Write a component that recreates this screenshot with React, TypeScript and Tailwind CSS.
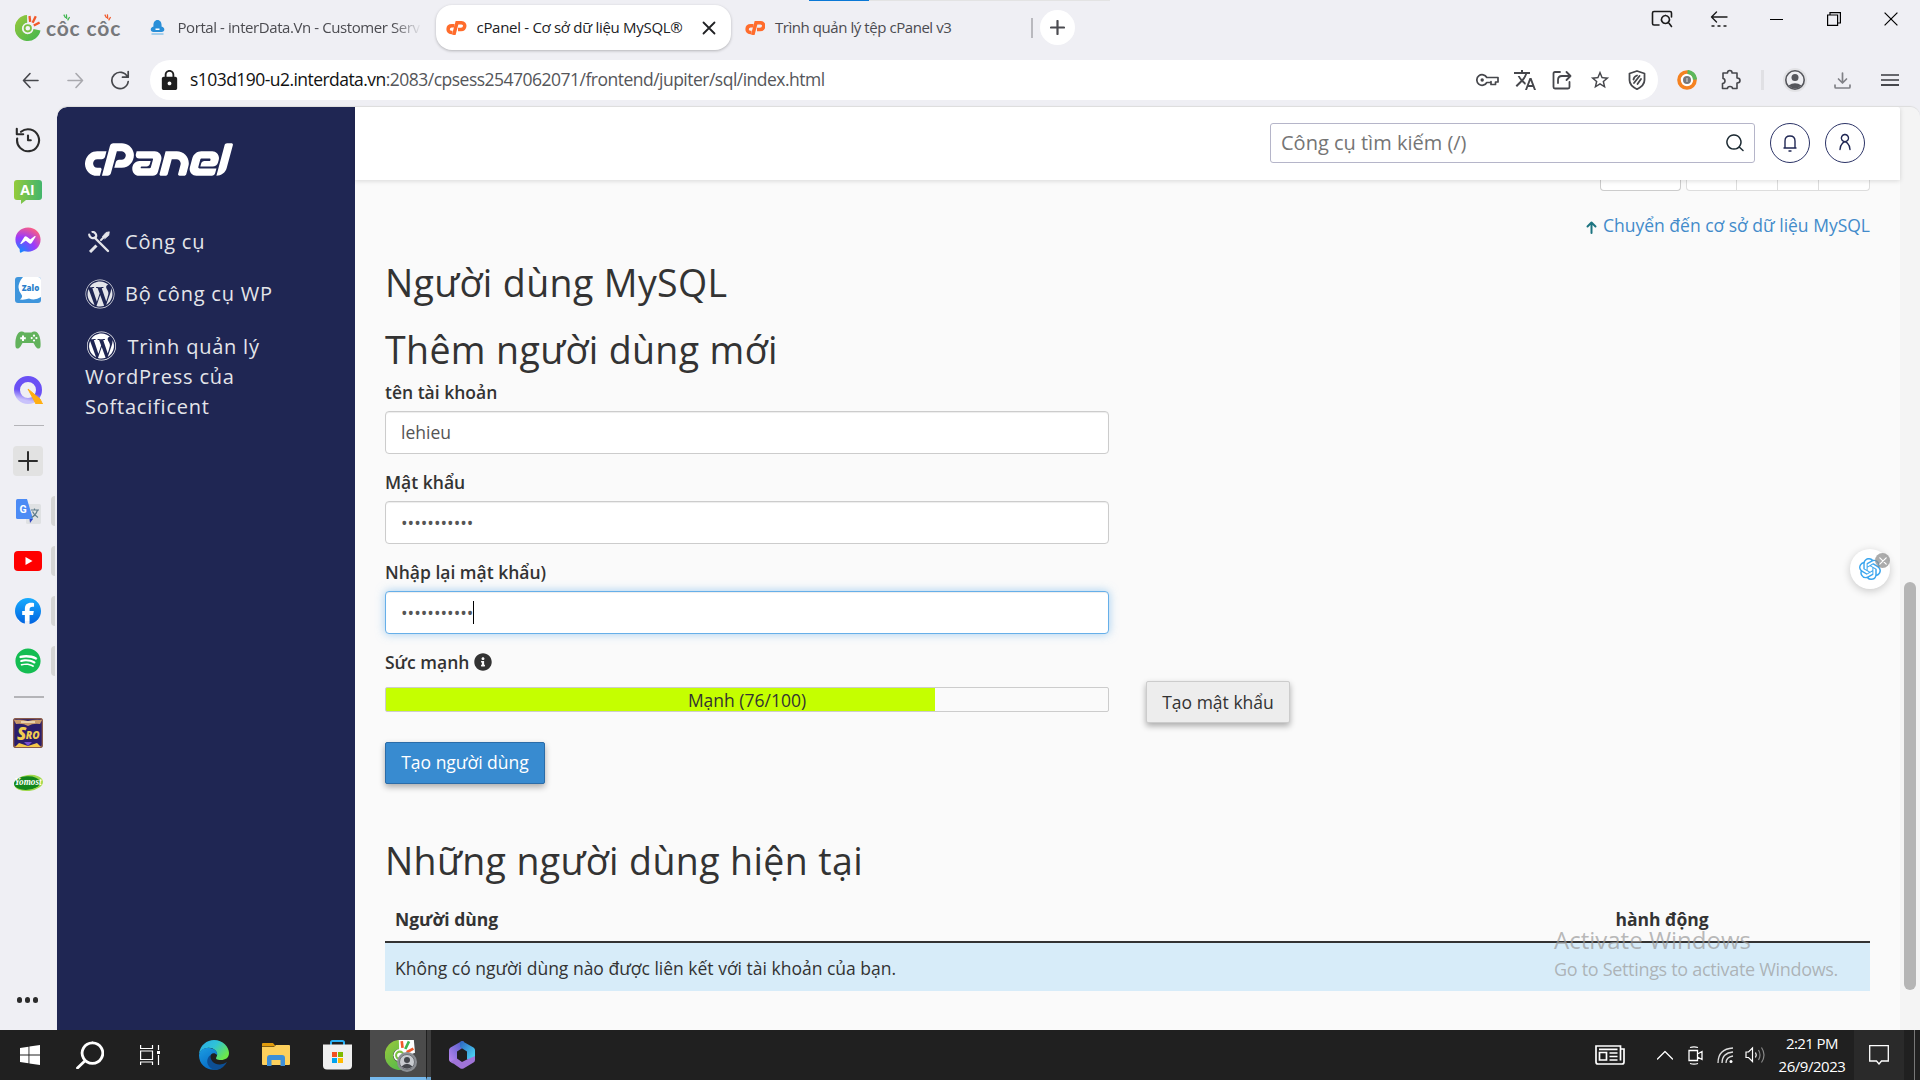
import React from 'react';
import { FaFacebookMessenger, FaFacebook, FaSpotify, FaWordpress, FaCpanel } from 'react-icons/fa6';
import { FaInfoCircle } from 'react-icons/fa';
import { SiOpenai } from 'react-icons/si';
import { MdLock, MdTranslate, MdStarBorder } from 'react-icons/md';

function Line({ d, size = 20, w = 1.5, className = '', vb }: { d: string; size?: number; w?: number; className?: string; vb?: string }) {
  return (
    <svg width={size} height={size} viewBox={vb ?? `0 0 ${size} ${size}`} fill="none" stroke="currentColor" strokeWidth={w} strokeLinecap="round" strokeLinejoin="round" className={`shrink-0 ${className}`}>
      <path d={d} />
    </svg>
  );
}

function CocMark({ size = 26, outlined }: { size?: number; outlined?: boolean }) {
  return (
    <svg width={size} height={size} viewBox="0 0 26 26" className="shrink-0">
      <defs>
        <linearGradient id="coc" x1="0" y1="0" x2="1" y2="1">
          <stop offset="0" stopColor="#9bc93c" />
          <stop offset="1" stopColor="#3fb54e" />
        </linearGradient>
      </defs>
      {outlined && <path d="M11 0H25L26 11 18 14 12 8Z" fill="#fff" />}
      <path d="M12 0A13 13 0 1 0 25.500 15.500L18.500 14A5.800 5.800 0 1 1 12.200 7.700Z" fill="url(#coc)" />
      <circle cx="12.800" cy="13.300" r="5.400" fill={outlined ? '#fff' : '#f4f4f8'} />
      <circle cx="12.800" cy="13.300" r="3.200" fill="none" stroke="#7cc143" strokeWidth="1.800" />
      <path d="M14.500 1 15.200 6.800M24.600 7.400 18.800 10.600" stroke="#f1592a" strokeWidth="2.300" />
      <path d="M20.800 1.200 17.600 7.800" stroke={outlined ? '#3fb54e' : '#f1592a'} strokeWidth="2.300" />
    </svg>
  );
}

function CocSyllable({ color }: { color: string }) {
  return (
    <span className="relative">
      côc
      <svg className="absolute left-[17px] top-[-2px]" width="7" height="7" viewBox="0 0 7 7">
        <path d="M.8.6 2.6 4M3.4.4 3.8 5M6.6 3 4.6 6.4" stroke={color} strokeWidth="1.2" />
      </svg>
    </span>
  );
}

function CpFavicon() {
  return (
    <span className="block h-[15px] w-[20.5px] shrink-0 overflow-hidden">
      <svg width="21" height="15" viewBox="0 0 42 30" fill="none" stroke="#ff6c2c" strokeWidth="7">
        <path d="M17 11.5H11.5C2 11.5 2 25 10.5 25H13" />
        <path d="M15.5 30 22 5.500H31C40.500 5.500 39 19 30 19H24" />
      </svg>
    </span>
  );
}

function TabBar() {
  return (
    <div className="relative flex h-[55px] items-center pl-[15px] text-[15px] text-[#4b4b50]">
      <div className="absolute left-[809px] top-0 h-px w-[301px] bg-[#e3e3e3]"><div className="h-px w-[60px] bg-[#0a78d6]" /></div>
      <div className="flex w-[135px] items-center">
        <CocMark />
        <div className="ml-[5px] flex gap-[6px] font-['Lato',sans-serif] text-[21px] font-bold leading-6 tracking-[0.8px] text-[#77787b]">
          <CocSyllable color="#3fb54e" />
          <CocSyllable color="#f1592a" />
        </div>
      </div>
      <div className="flex w-[286px] items-center">
        <svg width="15" height="15" viewBox="0 0 14 15" className="shrink-0">
          <path d="M7 0C10 0 11.500 3 11 6.500 15 7.500 14.500 12 11 12H3C-.5 12-.8 7.500 3 6.500 2.500 3 4 0 7 0Z" fill="#2a8fd8" />
          <path d="M5 8.500H9V10H5Z" fill="#fff" />
          <path d="M1 14H13" stroke="#8cc4ea" strokeWidth="1.500" />
        </svg>
        <span className="ml-[12.500px] w-[244px] overflow-hidden whitespace-nowrap tracking-[-0.418px] [mask-image:linear-gradient(to_right,black_88%,transparent)]">Portal - interData.Vn - Customer Serv</span>
      </div>
      <div className="flex h-[45px] w-[295px] items-center rounded-[16px] bg-white pl-[10px] pr-[15px] text-[#202124] shadow-[0_1px_3px_rgba(0,0,0,0.25)]">
        <CpFavicon />
        <span className="ml-[10px] flex-1 whitespace-nowrap tracking-[-0.297px]">cPanel - Cơ sở dữ liệu MySQL®</span>
        <Line d="M1.500 1.500 12.500 12.500M12.500 1.500 1.500 12.500" size={14} w={1.8} />
      </div>
      <div className="flex w-[300px] items-center pl-[13.500px]">
        <CpFavicon />
        <span className="ml-[10px] whitespace-nowrap tracking-[-0.440px]">Trình quản lý tệp cPanel v3</span>
      </div>
      <div className="h-5 w-[2px] bg-[#b9b9be]" />
      <div className="ml-[7px] flex size-[35px] items-center justify-center rounded-full bg-white">
        <Line d="M7.500 1V14M1 7.500H14" size={15} w={2.2} />
      </div>
      <div className="ml-auto flex h-[38px] self-start text-[#1b1b1b]">
        <div className="flex w-[57.25px] items-center justify-center"><Line size={22} w={1.600} d="M8 17H3Q1.500 17 1.500 15.500V5Q1.500 3.500 3 3.500H19Q20.500 3.500 20.500 5V9M14.500 7.500A4 4 0 1 1 14.400 7.500M17.500 14.500 20.500 18.500" /></div>
        <div className="flex w-[57.25px] items-center justify-center pr-[2px]"><Line size={18} w={1.400} d="M17 7H1.500M6.500 2 1.500 7 6.500 12M2 16H4M8 16H10M14 16H16" /></div>
        <div className="flex w-[57.25px] items-center justify-center"><div className="h-px w-[13px] bg-black" /></div>
        <div className="flex w-[57.25px] items-center justify-center"><svg width="14" height="14" viewBox="0 0 14 14" fill="none" stroke="#000" strokeWidth="1.200"><path d="M.6 3H10.600V13.400H.6ZM3 3V.6H13.400V11H10.600" /></svg></div>
        <div className="flex w-[57.25px] items-center justify-center"><svg width="14" height="14" viewBox="0 0 14 14" stroke="#000" strokeWidth="1.200"><path d="M.6.6 13.400 13.400M13.400.6.6 13.400" /></svg></div>
      </div>
    </div>
  );
}

function Toolbar() {
  const cell = 'flex w-[37.5px] items-center justify-center';
  return (
    <div className="flex h-[52px] pt-[5px] text-[#46474c]">
      <div className="flex h-10 w-[150px] items-center">
        <Line className="ml-[21.500px]" size={17} w={1.600} d="M16 8.500H1.500M8 1.500 1.500 8.500 8 15.500" />
        <Line className="ml-[28px] text-[#a9a9ae]" size={17} w={1.600} d="M1 8.500H15.500M9 1.500 15.500 8.500 9 15.500" />
        <Line className="ml-[26.500px]" size={20} w={1.700} d="M17.500 7A8.200 8.200 0 1 0 18.200 11.500M18.200 1.500V7.200H12.500" />
      </div>
      <div className="flex h-10 w-[1508px] items-center rounded-full bg-white pl-[8px] pr-[2px]">
        <MdLock size={23} className="shrink-0 text-[#1f1f1f]" />
        <span className="ml-[9px] flex-1 whitespace-nowrap pb-px text-[17.5px] tracking-[-0.510px] text-[#55565a]"><span className="tracking-[-0.550px] text-[#111]">s103d190-u2.interdata.vn</span>:2083/cpsess2547062071/frontend/jupiter/sql/index.html</span>
        <div className="flex h-full">
          <div className={cell}><svg width="23" height="14" viewBox="0 0 23 14" fill="none" stroke="currentColor" strokeWidth="1.700"><path d="M10.800 4.500A5.300 5.300 0 1 0 10.800 9.500H15V8.500V11.500H19.500V9H22V4.500Z" strokeLinejoin="round" /><circle cx="6.200" cy="7" r="1.700" fill="currentColor" stroke="none" /></svg></div>
          <div className={cell}><MdTranslate size={24} /></div>
          <div className={cell}><Line size={20} w={1.800} d="M8 2H3Q1.500 2 1.500 3.500V17Q1.500 18.500 3 18.500H16Q17.500 18.500 17.500 17V12M6 13V10Q6 6 10 6H18.500M14.500 2 18.500 6 14.500 10" /></div>
          <div className={cell}><MdStarBorder size={22} /></div>
          <div className={cell}><Line size={20} w={1.800} d="M10 1 17.500 3.500V10Q17.500 15.500 10 19.200 2.500 15.500 2.500 10V3.500ZM6.500 9.500Q7 6.500 10 5.500M7 13 12.500 6M10.500 14 14 9" /></div>
        </div>
      </div>
      <div className="ml-[7px] flex h-10 items-center">
        <div className="flex w-11 justify-center">
          <svg width="20" height="20" viewBox="0 0 20 20"><circle cx="10" cy="10" r="8" fill="#fff" stroke="#f58220" strokeWidth="3.600" /><path d="M10.500 2A8 8 0 0 1 18 9.500" fill="none" stroke="#5cb85c" strokeWidth="4.200" /><circle cx="10" cy="10" r="4" fill="#77787b" /><path d="M10 8V12" stroke="#ddd" /></svg>
        </div>
        <div className="flex w-11 justify-center"><Line size={22} w={1.600} d="M3 4H7.500Q7.500 1.500 9.800 1.500T12 4H17V9Q20 9 20 11.500T17 14V19.500H12.500Q12.500 17.500 10 17.500T7.500 19.500H2.500V14.500Q5 14.200 5 12T3 9.500Z" /></div>
        <div className="ml-[8px] h-5 w-[3px] bg-[#e0e0e4]" />
        <div className="ml-[7px] flex w-12 justify-center">
          <svg width="24" height="24" viewBox="0 0 24 24"><circle cx="12" cy="12" r="12" fill="#e2e2e5" /><circle cx="12" cy="12" r="9.200" fill="#eeeef2" stroke="#55565c" strokeWidth="1.600" /><circle cx="12" cy="9.500" r="3.500" fill="#55565c" /><path d="M5.500 17.500Q12 13 18.500 17.500Q12 24 5.500 17.500Z" fill="#55565c" /></svg>
        </div>
        <div className="flex w-[47px] justify-center text-[#808186]"><Line size={17} w={1.700} d="M8.500 1V10.500M4.500 7 8.500 11 12.500 7M1 13V15Q1 16 2 16H15Q16 16 16 15V13" /></div>
        <div className="flex w-12 flex-col items-center gap-[3px]"><i className="h-[2px] w-[18px] bg-[#66676c]" /><i className="h-[2px] w-[18px] bg-[#66676c]" /><i className="h-[2px] w-[18px] bg-[#46474c]" /></div>
      </div>
    </div>
  );
}

function Cell({ children, handle }: { children: React.ReactNode; handle?: boolean }) {
  return (
    <div className="relative flex h-[50px] w-full shrink-0 items-center justify-center pr-px">
      {children}
      {handle && <span className="absolute right-[2px] top-[10px] h-[30px] w-1 rounded-l-[4px] bg-[#d5d5d5]" />}
    </div>
  );
}

function Backed({ children, shape }: { children: React.ReactNode; shape: string }) {
  return <span className="relative flex items-center justify-center"><span className={`absolute bg-white ${shape}`} /><span className="relative">{children}</span></span>;
}

function Dock() {
  return (
    <div className="flex w-[57px] shrink-0 flex-col items-center pt-[8px]">
      <Cell><Line className="text-[#2b2b2b]" size={26} w={2.100} d="M2.200 11.500A11 11 0 1 0 6 4.800M1.800 1.800V7.200H8.200M13 8.500V13.200H15.800" /></Cell>
      <Cell>
        <svg width="28" height="24" viewBox="0 0 28 24" className="mt-[3px]"><defs><linearGradient id="ai"><stop stopColor="#94cb3b" /><stop offset="1" stopColor="#43b56c" /></linearGradient></defs><path d="M3 0H25Q28 0 28 3V17Q28 20 25 20H12L7 24V20H3Q0 20 0 17V3Q0 0 3 0Z" fill="url(#ai)" /><text x="13.500" y="14.500" textAnchor="middle" fontFamily="Open Sans" fontWeight="700" fontSize="14" fill="#fff">AI</text></svg>
      </Cell>
      <Cell>
        <svg width="0" height="0" className="absolute"><defs>
          <radialGradient id="msg" cx="0.2" cy="1" r="1.100"><stop stopColor="#0a8dff" /><stop offset="0.550" stopColor="#9a39fd" /><stop offset="1" stopColor="#ff5f7e" /></radialGradient>
          <linearGradient id="fb" x1="0" y1="0" x2="0" y2="1"><stop stopColor="#18acfe" /><stop offset="1" stopColor="#0163e0" /></linearGradient>
        </defs></svg>
        <Backed shape="size-4"><FaFacebookMessenger size={26} fill="url(#msg)" /></Backed>
      </Cell>
      <Cell>
        <svg width="26" height="26" viewBox="0 0 26 26"><rect width="26" height="26" rx="3" fill="#3e95dc" /><path d="M8 0H23Q26 0 26 3V20Q20 24 14 21.500Q10 23 5 22.500Q7.500 21 7 18.500Q-.500 10 8 0Z" fill="#fff" /><text x="15.500" y="14" textAnchor="middle" fontFamily="Open Sans" fontWeight="800" fontSize="8" fill="#2b7fcb">Zalo</text></svg>
      </Cell>
      <Cell>
        <svg width="26" height="18" viewBox="0 0 26 18"><path d="M6 .5Q8 0 9.500 1.500H16.500Q18 0 20 .5C25 1.500 26 10 25.500 15.500 25 18.500 22 18 20.500 15.500L18.500 12H7.500L5.500 15.500C4 18 1 18.500.5 15.500 0 10 1 1.500 6 .5Z" fill="#62b25c" /><path d="M8 4.500V10M5.200 7.200H10.800" stroke="#fff" strokeWidth="2" /><g fill="#fff"><circle cx="19" cy="4.700" r="1.100" /><circle cx="19" cy="9.500" r="1.100" /><circle cx="16.700" cy="7.100" r="1.100" /><circle cx="21.400" cy="7.100" r="1.100" /></g></svg>
      </Cell>
      <Cell>
        <svg width="29" height="28" viewBox="0 0 29 28"><defs><linearGradient id="qq" x1="0.700" y1="0.100" x2="0.500" y2="1"><stop offset="0.550" stopColor="#6a50f5" /><stop offset="1" stopColor="#c9c2fb" /></linearGradient></defs><circle cx="14" cy="14" r="11" fill="none" stroke="url(#qq)" strokeWidth="6" /><path d="M14 13 26 23 28.500 28H22Z" fill="#ffae12" stroke="#ffae12" strokeLinejoin="round" /></svg>
      </Cell>
      <div className="flex h-[21px] shrink-0 items-center"><div className="h-px w-[30px] bg-[#b4b4b8]" /></div>
      <Cell><div className="mr-px flex size-[30px] items-center justify-center rounded-[4px] bg-[#e2e2e2] text-[#2b2b2b]"><Line size={20} w={2} d="M10 1V19M1 10H19" /></div></Cell>
      <Cell handle>
        <svg width="25" height="25" viewBox="0 0 25 25"><rect x="10" y="5" width="15" height="20" rx="1.500" fill="#dfe1e3" /><path d="M13.500 20 14 24 17 20Z" fill="#3348c0" /><path d="M1.500 0H11L17 20H1.500Q0 20 0 18.500V1.500Q0 0 1.500 0Z" fill="#4c8bf5" /><text x="7" y="14" textAnchor="middle" fontFamily="Roboto" fontWeight="700" fontSize="10.500" fill="#fff">G</text><path d="M15 11H23M18.500 9.500V11M21.500 11Q20 16 15.500 18.500M16.500 12.500Q18 16 22 18.500" stroke="#607d8b" strokeWidth="1.200" fill="none" /></svg>
      </Cell>
      <Cell handle>
        <svg width="28" height="20" viewBox="0 0 28 20"><rect width="28" height="20" rx="4" fill="#f00" /><path d="M11.500 6 18.500 10 11.500 14Z" fill="#fff" /></svg>
      </Cell>
      <Cell handle><Backed shape="size-5"><FaFacebook size={26} fill="url(#fb)" /></Backed></Cell>
      <Cell handle><Backed shape="size-4"><FaSpotify size={26} fill="#14bd52" /></Backed></Cell>
      <div className="flex h-[22px] shrink-0 items-center"><div className="h-[2px] w-[30px] bg-[#b4b4b8]" /></div>
      <Cell>
        <svg width="30" height="30" viewBox="0 0 30 30"><rect x="0.500" y="0.500" width="29" height="29" rx="3" fill="#2b1d6b" stroke="#8a5b4a" strokeWidth="1.600" /><path d="M1 2Q8 1 15 3Q22 1 29 2L27 6Q20 5 15 8Q10 5 3 6Z" fill="#c99a6a" /><path d="M8 4H22" stroke="#f3e3c0" strokeWidth="1.500" /><path d="M2 29 6 25 15 28 24 25 28 29Z" fill="#f4c84a" /><path d="M11 24H19L15 28Z" fill="#7a4fd0" /><text x="4" y="22" fontFamily="Open Sans" fontWeight="800" fontStyle="italic" fontSize="17" fill="#f0cd50">S<tspan fontSize="10" dx="-0.5" dy="-1">RO</tspan></text></svg>
      </Cell>
      <Cell>
        <svg width="30" height="18" viewBox="0 0 30 18"><ellipse cx="15.500" cy="9" rx="14.500" ry="8" fill="#9fd94c" transform="rotate(-6 15 9)" /><ellipse cx="14" cy="9" rx="13" ry="6.800" fill="#12861c" transform="rotate(-4 15 9)" /><text x="15" y="11" textAnchor="middle" textLength="27" lengthAdjust="spacingAndGlyphs" fontFamily="Liberation Serif" fontWeight="700" fontStyle="italic" fontSize="10.500" fill="#fff">Yomost</text></svg>
      </Cell>
      <div className="mb-[27.500px] mt-auto flex gap-[2.500px] pr-[2px]"><i className="size-[5.500px] rounded-full bg-[#2b2b2b]" /><i className="size-[5.500px] rounded-full bg-[#2b2b2b]" /><i className="size-[5.500px] rounded-full bg-[#2b2b2b]" /></div>
    </div>
  );
}

function SideNav() {
  return (
    <nav className="w-[298px] shrink-0 rounded-tl-[10px] bg-[#1f2653] pl-[28px] pr-10 text-[20px] leading-[30px] tracking-[0.780px] text-[#e4e5ea]">
      <div className="flex h-[70px] items-end pt-[38px]"><FaCpanel className="h-[148px] w-[148px] shrink-0 text-white [margin-bottom:-58px]" /></div>
      <div className="mt-[50px] flex h-[30px] items-center">
        <svg className="ml-[3px]" width="22" height="22" viewBox="0 0 22 22" fill="none" stroke="#e4e5ea" strokeLinecap="round"><path d="M6.500 6.500 20 20" strokeWidth="2.400" /><path d="M2 21 8.500 14.500" strokeWidth="3" strokeLinecap="butt" /><path d="M13 9 15.500 6.500" strokeWidth="2" /><path d="M1.200 3.500A4 4 0 0 0 8 6 4 4 0 0 0 4.500.8" strokeWidth="2.200" /><path d="M14.500 5.500 18 1.500 21.300.8 20.800 4.300 17 7.600Z" fill="#e4e5ea" strokeWidth="0.800" /></svg>
        <span className="ml-[15px]">Công cụ</span>
      </div>
      <div className="mt-[22px] flex h-[30px] items-center">
        <FaWordpress size={30} />
        <span className="ml-[10px] pb-px">Bộ công cụ WP</span>
      </div>
      <div className="mt-[23px]"><FaWordpress size={31} className="mr-[10.500px] inline-block pb-px text-white [margin-left:1px] [margin-top:-5px]" />Trình quản lý WordPress của Softacificent</div>
    </nav>
  );
}

function PageHeader() {
  const round = 'flex size-10 items-center justify-center rounded-full border-[1.5px] border-[#2c3467] text-[#1f2653]';
  return (
    <header className="relative z-10 flex h-[73px] items-center justify-end rounded-tr-[2px] bg-white pb-px pr-[35px] shadow-[0_1px_5px_rgba(0,0,0,0.14)]">
      <div className="mr-[15px] flex h-10 w-[485px] items-center justify-between rounded-[3px] border border-[#b5b5c9] pl-[10px] pr-[10px] text-[20px] text-[#757575]">
        <span>Công cụ tìm kiếm (/)</span>
        <Line className="text-[#1d2b33]" size={18} w={1.500} d="M8 1A7 7 0 1 1 7.900 1M13.200 13 17 16.500" />
      </div>
      <div className={`mr-[15px] ${round}`}><Line className="mb-px" size={18} w={1.400} d="M3 14H15M4 14V7Q4 2 9 2T14 7V14M8 17H10" /></div>
      <div className={round}><Line className="mb-[2px]" size={18} w={1.400} d="M9 1.500A3.600 3.600 0 1 1 8.900 1.500M4 16.500Q4.200 12.500 6.500 10.200L9 8.700 11.500 10.200Q13.800 12.500 14 16.500" /></div>
    </header>
  );
}

const DOTS = '•••••••••••';

function Field({ label, children, focused }: { label: string; children: React.ReactNode; focused?: boolean }) {
  return (
    <div className="mb-4">
      <div className="font-semibold leading-[25px]">{label}</div>
      <div className={focused
        ? 'mt-[6px] flex h-[43px] w-[724px] items-center rounded-[4px] border border-[#66afe9] bg-white px-[15px] text-[#555] shadow-[inset_0_1px_1px_rgba(0,0,0,0.075),0_0_10px_rgba(102,175,233,0.6)]'
        : 'mt-[6px] flex h-[43px] w-[724px] items-center rounded-[4px] border border-[#ccc] bg-white px-[15px] text-[#555] shadow-[inset_0_1px_1px_rgba(0,0,0,0.075)]'}>
        {children}
      </div>
    </div>
  );
}

function Main() {
  const btn = 'flex h-[42px] items-center justify-center rounded-[2px] border shadow-[0_3px_6px_rgba(0,0,0,0.32)]';
  return (
    <main className="relative flex-1 bg-[#fafafa] pl-[30px] pr-[30px] text-[17.5px] text-[#333]">
      <div className="flex h-[11px] justify-end gap-[5px]">
        <div className="w-[81px] rounded-b-[4px] border border-t-0 border-[#ccc] bg-white" />
        <div className="flex w-[184px] rounded-b-[4px] border border-t-0 border-[#ddd] bg-white">
          <i className="w-[50px] border-r border-[#ddd]" /><i className="w-[41px] border-r border-[#ddd]" /><i className="w-[41px] border-r border-[#ddd]" />
        </div>
      </div>
      <div className="mt-[22px] flex h-[25px] items-center justify-end text-[#428bca]">
        <Line className="mr-[5px] mt-[3px] text-[#1d7480]" size={13} w={2} d="M6.500 12V1.500M2.500 5.500 6.500 1.500 10.500 5.500" />
        Chuyển đến cơ sở dữ liệu MySQL
      </div>
      <h2 className="mt-[22px] text-[37.5px] leading-[45px] tracking-[0.380px]">Người dùng MySQL</h2>
      <h2 className="mb-[8px] mt-[22px] text-[37.5px] leading-[45px] tracking-[0.380px]">Thêm người dùng mới</h2>
      <Field label="tên tài khoản">lehieu</Field>
      <Field label="Mật khẩu"><span className="pt-[2px]">{DOTS}</span></Field>
      <Field label="Nhập lại mật khẩu)" focused><span className="pt-[2px]">{DOTS}</span><span className="h-[23px] w-px bg-black" /></Field>
      <div className="flex h-[25px] items-center font-semibold">Sức mạnh <FaInfoCircle size={18} className="mb-px ml-[5px]" /></div>
      <div className="mt-[6px] flex">
        <div className="mt-[6px] flex h-[25px] w-[724px] items-center justify-center rounded-[2px] border border-[#ccc] bg-[linear-gradient(to_right,#c5ff00_76%,#fafafa_76%)] pt-[2px]">Mạnh (76/100)</div>
        <div className={`ml-[37px] w-[144px] border-[#ccc] bg-[#ededed] ${btn}`}>Tạo mật khẩu</div>
      </div>
      <div className={`mt-[19px] w-[160px] border-[#2b6ca8] bg-[#388bd0] pb-px text-white ${btn}`}>Tạo người dùng</div>
      <h2 className="mt-[54px] text-[37.5px] leading-[45px] tracking-[0.380px]">Những người dùng hiện tại</h2>
      <table className="mt-[14px] w-full table-fixed border-collapse text-left">
        <thead><tr className="border-b-2 border-[#333] leading-[25px]"><th className="w-[1220.500px] px-[10px] pb-[9px] pt-[10px] font-bold">Người dùng</th><th className="px-[10px] pb-[9px] pt-[10px] font-bold">hành động</th></tr></thead>
        <tbody><tr className="leading-[25px]"><td colSpan={2} className="h-[48px] bg-[#d7ecf9] px-[10px] pb-[10px] pt-[13px]">Không có người dùng nào được liên kết với tài khoản của bạn.</td></tr></tbody>
      </table>
      <div className="absolute left-[1199px] top-[742px] whitespace-nowrap text-[#9a9a9a]/70">
        <div className="h-[35px] text-[24px] leading-[36px]">Activate Windows</div>
        <div className="text-[18px] leading-[24px] tracking-[-0.312px]">Go to Settings to activate Windows.</div>
      </div>
      <div className="absolute left-[1495px] top-[369px] flex size-10 items-center justify-center rounded-full bg-white shadow-[0_2px_8px_rgba(0,0,0,0.2)]">
        <SiOpenai size={22} color="#3aa5ee" />
        <span className="absolute right-0 top-[4px] flex size-[15px] items-center justify-center rounded-full bg-[#8f8f8f]/75"><Line className="text-white" size={8} w={1.200} d="M.800.800 7.200 7.200M7.200.800.800 7.200" /></span>
      </div>
    </main>
  );
}

function EdgeIcon() {
  return (
    <svg width="30" height="30" viewBox="0 0 30 30">
      <defs>
        <linearGradient id="e1" x1="0" y1="0" x2="1" y2="0.600"><stop stopColor="#2aa9e8" /><stop offset="0.500" stopColor="#2fc2d8" /><stop offset="1" stopColor="#6be84a" /></linearGradient>
        <linearGradient id="e2" x1="0" y1="0" x2="0.600" y2="1"><stop stopColor="#1b9de2" /><stop offset="1" stopColor="#0668c4" /></linearGradient>
      </defs>
      <path d="M0 14C1 5 8 0 15 0C24 0 30 7 30 13C30 18 26 20 22 20C18 20 16 19 17.500 17C19.500 14 17 9 12 8Q4 6.500 0 14Z" fill="url(#e1)" />
      <path d="M0 15C1 9 6 7.500 11 8C17 9 19 13 18 15C15 11 10 14 11 19Q13 26 22 28C12 33 0 27 0 15Z" fill="url(#e2)" />
      <path d="M11.500 15C11 21 16 25 21 24.500Q25 24 28 22C26 26 22 29 18 30C9 30 5 20 11.500 15Z" fill="#0d4f94" />
    </svg>
  );
}

function Taskbar() {
  const cell = 'flex h-full w-[61.500px] items-center justify-center';
  return (
    <footer className="flex h-[50px] items-center bg-[#202020] text-white">
      <div className="flex h-full w-[60px] items-center justify-center"><svg width="20" height="20" viewBox="0 0 20 20" fill="#fff"><path d="M0 3 8.500 1.700V9.400H0ZM9.400 1.500 20 0V9.400H9.400ZM0 10.400H8.500V18.200L0 17ZM9.400 10.400H20V20L9.400 18.400Z" /></svg></div>
      <div className="flex h-full w-[60px] items-center justify-center"><Line size={28} w={2.800} d="M16.500 1.800A10.300 10.300 0 1 1 16.400 1.800M9.300 19.500 1.500 27" /></div>
      <div className="flex h-full w-[60px] items-center justify-center"><svg width="20" height="20" viewBox="0 0 20 20" fill="none" stroke="#fff" strokeWidth="1.200"><path d="M.600 0V3.500H12.500V0M.600 6H12.500V14.500H.600ZM.600 20V17H12.500V20M18.500 0V5M18.500 10V20" /><path d="M17 6H20V9H17Z" fill="#fff" stroke="none" /></svg></div>
      <div className="flex h-full w-[68px] items-center justify-center"><EdgeIcon /></div>
      <div className="flex h-full w-[56px] items-center justify-center">
        <svg width="28" height="24" viewBox="0 0 28 24"><path d="M0 1Q0 0 1 0H11L14 3.500H0Z" fill="#e09b0c" /><path d="M0 4H12L14 2H27Q28 2 28 3V21Q28 22 27 22H1Q0 22 0 21Z" fill="#fdd05c" /><path d="M5 23V15Q5 12 8 12H20Q23 12 23 15V23H18.500V17H9.500V23Z" fill="#3d8fd8" /></svg>
      </div>
      <div className="flex h-full w-[66px] items-center justify-center">
        <svg width="29" height="30" viewBox="0 0 29 30"><path d="M8 6V2.500Q8 1 9.500 1H19.500Q21 1 21 2.500V6" fill="none" stroke="#29b0f5" strokeWidth="2" /><path d="M0 4.500H29V25.500Q29 29.500 25 29.500H4Q0 29.500 0 25.500Z" fill="#efefef" /><path d="M9 12H14V17H9Z" fill="#f25022" /><path d="M15 12H20V17H15Z" fill="#7fba00" /><path d="M9 18H14V23H9Z" fill="#00a4ef" /><path d="M15 18H20V23H15Z" fill="#ffb900" /></svg>
      </div>
      <div className="flex h-full">
        <div className="flex w-[56px] items-center justify-center border-b-[3px] border-[#76b9ed] bg-[#4b4b4b] pl-[3px] pt-[2px]">
          <div className="relative"><CocMark size={30} outlined />
            <svg className="absolute bottom-[-2px] right-[-2px]" width="20" height="20" viewBox="0 0 20 20"><circle cx="10" cy="10" r="10" fill="#8c8f94" /><circle cx="10" cy="10" r="7.500" fill="#c8cbcf" stroke="#6e7176" /><circle cx="10" cy="8" r="3" fill="#44474c" /><path d="M4.500 14.500Q10 9 15.500 14.500Q10 19 4.500 14.500Z" fill="#44474c" /></svg>
          </div>
        </div>
        <div className="w-[5px] border-b-[3px] border-l border-[#68a4d2] border-l-[#202020] bg-[#3d3d3d]" />
      </div>
      <div className={cell}>
        <svg width="26" height="28" viewBox="0 0 26 28"><defs><linearGradient id="m1" x1="0" y1="1" x2="1" y2="0"><stop stopColor="#c08af0" /><stop offset="1" stopColor="#4a58c8" /></linearGradient><linearGradient id="m2" x1="0" y1="0" x2="1" y2="1"><stop stopColor="#2b62c0" /><stop offset="1" stopColor="#4fe0f8" /></linearGradient></defs><path d="M13 0 1.500 6.500Q0 7.500 0 9V18.500Q0 20 1.500 21L4 22.500 8 19.500V10.500L15 6V.5Z" fill="url(#m1)" /><path d="M13 0 24.500 6.500Q26 7.500 26 9V18L18 18.500V10.500L11 6V1Z" fill="url(#m2)" /><path d="M1.500 20.500 8 17.500 13 21 18 18.500 26 15V19Q26 20.500 24.500 21.500L14.500 27.500Q13 28 11.500 27.500Z" fill="#a074d8" /></svg>
      </div>
      <div className="ml-auto flex h-full items-center">
        <svg width="30" height="20" viewBox="0 0 30 20" fill="none" stroke="#fff" strokeWidth="1.700"><path d="M25.500 4V1H1V17Q1 19 3 19H27Q29 19 29 17V4H25.500V15.500" /><path d="M4.500 7.500H11.500V15H4.500ZM4 4.300H22.500M14.500 8H22.500M14.500 11.500H22.500M14.500 15H22.500" /></svg>
        <Line className="ml-[32px]" size={16} w={1.300} d="M.500 12 8 4.500 15.500 12" />
        <svg className="ml-[15px]" width="15" height="19" viewBox="0 0 15 19" fill="none" stroke="#fff" strokeWidth="1.300"><path d="M1 4.500H9.500V14.500H1ZM9.500 8 14 5.500V13.500L9.500 11M2 1.500Q6 .200 10 1.500M2 17.500Q6 18.800 10 17.500" /></svg>
        <svg className="ml-[14px]" width="17" height="17" viewBox="0 0 17 17" fill="none" stroke="#ddd" strokeWidth="1.300"><path d="M1 16Q1 2 16 1M5 16Q5 6 16 5M9 16Q9 10 16 9" /><circle cx="14" cy="14.500" r="1.500" fill="#fff" stroke="none" /></svg>
        <svg className="ml-[11px]" width="21" height="18" viewBox="0 0 21 18" fill="none" stroke="#fff" strokeWidth="1.200"><path d="M1 6H3.500L7.500 2V15.500L3.500 11.500H1ZM10.500 6.500Q12 9 10.500 11.500" /><path d="M13.500 4Q16.500 9 13.500 14M16.500 1.500Q21.500 9 16.500 16.500" stroke="#888" /></svg>
        <div className="ml-[12px] flex w-[68px] flex-col items-center pb-px text-[15px] leading-[23px]"><span className="tracking-[-0.600px]">2:21 PM</span><span className="tracking-[-0.450px]">26/9/2023</span></div>
        <div className="ml-[8px] flex h-full w-[50px] items-center justify-center bg-[#2a2a2a]"><svg width="20" height="20" viewBox="0 0 20 20" fill="none" stroke="#fff" strokeWidth="1.300"><path d="M.700.700H19.300V16H12.500L10 19 7.500 16H.700Z" /></svg></div>
        <div className="ml-[10px] mr-[5px] h-full w-px bg-[#777]" />
      </div>
    </footer>
  );
}

export default function App() {
  return (
    <div className="flex h-[1080px] w-[1920px] flex-col overflow-hidden bg-[#efeff4] font-['Open_Sans',sans-serif]">
      <TabBar />
      <Toolbar />
      <div className="flex h-[923px]">
        <Dock />
        <div className="flex flex-1 overflow-hidden rounded-t-[10px] shadow-[0_-1px_1px_#dcdcdc]">
          <SideNav />
          <div className="flex w-[1545px] flex-col"><PageHeader /><Main /></div>
          <div className="w-5 bg-[#f4f4f4] pl-[4px] pt-[475px]"><div className="h-[408px] w-3 rounded-full bg-[#b5b5b5]" /></div>
        </div>
      </div>
      <Taskbar />
    </div>
  );
}
